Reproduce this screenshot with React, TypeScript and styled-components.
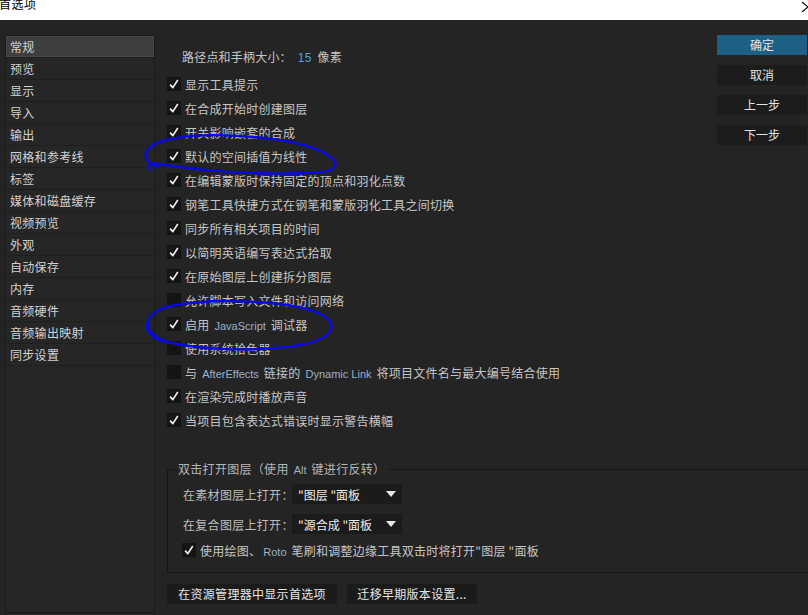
import React from 'react';
import styled, { createGlobalStyle } from 'styled-components';

const GlobalStyle = createGlobalStyle`
  html, body {
    margin: 0;
    padding: 0;
    background: #242424;
  }
  body {
    font-family: "Noto Sans CJK SC", "Noto Sans", "Liberation Sans", sans-serif;
    font-size: 12px;
    color: #c6c6c6;
  }
`;

const categories = [
  '常规', '预览', '显示', '导入', '输出', '网格和参考线', '标签', '媒体和磁盘缓存',
  '视频预览', '外观', '自动保存', '内存', '音频硬件', '音频输出映射', '同步设置',
];

type Part = string | { en: string };

const options: { checked: boolean; parts: Part[] }[] = [
  { checked: true, parts: ['显示工具提示'] },
  { checked: true, parts: ['在合成开始时创建图层'] },
  { checked: true, parts: ['开关影响嵌套的合成'] },
  { checked: true, parts: ['默认的空间插值为线性'] },
  { checked: true, parts: ['在编辑蒙版时保持固定的顶点和羽化点数'] },
  { checked: true, parts: ['钢笔工具快捷方式在钢笔和蒙版羽化工具之间切换'] },
  { checked: true, parts: ['同步所有相关项目的时间'] },
  { checked: true, parts: ['以简明英语编写表达式拾取'] },
  { checked: true, parts: ['在原始图层上创建拆分图层'] },
  { checked: false, parts: ['允许脚本写入文件和访问网络'] },
  { checked: true, parts: ['启用 ', { en: 'JavaScript' }, ' 调试器'] },
  { checked: false, parts: ['使用系统拾色器'] },
  { checked: false, parts: ['与 ', { en: 'AfterEffects' }, ' 链接的 ', { en: 'Dynamic Link' }, ' 将项目文件名与最大编号结合使用'] },
  { checked: true, parts: ['在渲染完成时播放声音'] },
  { checked: true, parts: ['当项目包含表达式错误时显示警告横幅'] },
];

export default function App() {
  return (
    <>
      <GlobalStyle />
      <Window>
        <TitleBar>
          <TitleText>首选项</TitleText>
          <CloseGlyph width="8" height="12" viewBox="0 0 8 12">
            <path d="M2 2 L8 7 M2 12 L8 7" stroke="#111" strokeWidth="1.2" fill="none" />
          </CloseGlyph>
        </TitleBar>

        <Body>
          <Sidebar>
            {categories.map((c, i) => (
              <NavItem key={c} $active={i === 0}>{c}</NavItem>
            ))}
          </Sidebar>

          <Content>
            <SizeRow>
              路径点和手柄大小：<Value>15</Value>像素
            </SizeRow>

            {options.map((o, i) => (
              <OptionRow key={i}>
                <Checkbox checked={o.checked} />
                <span>
                  {o.parts.map((p, j) =>
                    typeof p === 'string' ? <React.Fragment key={j}>{p}</React.Fragment> : <Latin key={j}>{p.en}</Latin>
                  )}
                </span>
              </OptionRow>
            ))}

            <Group>
              <Legend>双击打开图层（使用 <Latin>Alt</Latin> 键进行反转）</Legend>
              <GroupInner>
                <FieldRow>
                  <FieldLabel>在素材图层上打开：</FieldLabel>
                  <Select>
                    <span>"图层 "面板</span>
                    <Caret />
                  </Select>
                </FieldRow>
                <FieldRow>
                  <FieldLabel>在复合图层上打开：</FieldLabel>
                  <Select>
                    <span>"源合成 "面板</span>
                    <Caret />
                  </Select>
                </FieldRow>
                <GroupOption>
                  <Checkbox checked />
                  <span>使用绘图、<Latin>Roto</Latin> 笔刷和调整边缘工具双击时将打开"图层 "面板</span>
                </GroupOption>
              </GroupInner>
            </Group>

            <FooterRow>
              <FooterButton $width={170}>在资源管理器中显示首选项</FooterButton>
              <FooterButton $width={130}>迁移早期版本设置...</FooterButton>
            </FooterRow>
          </Content>

          <ButtonColumn>
            <DialogButton $primary>确定</DialogButton>
            <DialogButton>取消</DialogButton>
            <DialogButton>上一步</DialogButton>
            <DialogButton>下一步</DialogButton>
          </ButtonColumn>
        </Body>

        <Annotations width="808" height="615" viewBox="0 0 808 615">
          <path
            d="M158 167 C138 160 142 145 170 139 C208 131 296 136 326 154 C344 165 336 173 305 173 C262 175 200 171 160 164 C150 162 146 166 150 170"
            stroke="#0a0ae0" strokeWidth="2.4" fill="none" strokeLinecap="round"
          />
          <path
            d="M168 342 C142 334 139 314 170 306 C222 296 302 302 324 316 C340 327 330 341 294 346 C250 352 200 350 162 341 C152 338 146 331 147 324"
            stroke="#0a0ae0" strokeWidth="2.4" fill="none" strokeLinecap="round"
          />
        </Annotations>
      </Window>
    </>
  );
}

function Checkbox({ checked }: { checked?: boolean }) {
  return (
    <Box>
      {checked && (
        <svg width="14" height="14" viewBox="0 0 14 14">
          <path d="M3.2 7.6 L5.8 10.6 L10.8 3" stroke="#ececec" strokeWidth="1.7" fill="none" strokeLinejoin="round" />
        </svg>
      )}
    </Box>
  );
}

const Window = styled.div`
  position: relative;
  width: 808px;
  height: 615px;
  overflow: hidden;
  display: flex;
  flex-direction: column;
`;

const TitleBar = styled.div`
  height: 20px;
  background: #ffffff;
  display: flex;
  justify-content: space-between;
  align-items: flex-start;
  overflow: hidden;
`;

const TitleText = styled.div`
  color: #000;
  font-size: 12px;
  line-height: 12px;
  margin: -2px 0 0 -1px;
  letter-spacing: 0.5px;
`;

const CloseGlyph = styled.svg`
  display: block;
`;

const Body = styled.div`
  flex: 1;
  display: grid;
  grid-template-columns: 150px 1fr 90px;
  column-gap: 12px;
  padding: 15px 1px 2px 5px;
  min-height: 0;
`;

const Sidebar = styled.div`
  background: #262626;
  border: 1px solid #1a1a1a;
  display: flex;
  flex-direction: column;
`;

const NavItem = styled.div<{ $active?: boolean }>`
  height: 21px;
  line-height: 21px;
  padding-left: 4px;
  color: #d2d2d2;
  border-bottom: 1px solid #1e1e1e;
  background: ${(p) => (p.$active ? '#3e3e3e' : 'transparent')};
  box-shadow: ${(p) => (p.$active ? 'inset 0 0 0 1px #474747' : 'none')};
  letter-spacing: 0.3px;
`;

const Content = styled.div`
  display: flex;
  flex-direction: column;
  padding-top: 10px;
  min-width: 0;
`;

const SizeRow = styled.div`
  height: 24px;
  line-height: 24px;
  padding-left: 15px;
  margin-bottom: 3px;
  letter-spacing: 0.2px;
`;

const Value = styled.span`
  color: #4ea1dc;
  margin: 0 6px;
  font-family: "Liberation Sans", sans-serif;
`;

const OptionRow = styled.div`
  height: 24px;
  display: flex;
  align-items: center;
  gap: 4px;
  white-space: nowrap;
  letter-spacing: 0.25px;
`;

const GroupOption = styled(OptionRow)`
  height: 20px;
  margin-top: -4px;
`;

const Box = styled.span`
  width: 14px;
  height: 14px;
  flex: none;
  background: #141414;
  display: inline-flex;
`;

const Latin = styled.span`
  color: #9db0c6;
  font-family: "Liberation Sans", sans-serif;
  font-size: 11px;
  letter-spacing: 0;
  margin: 0 2px;
`;

const Group = styled.fieldset`
  margin: 29px -120px 0 0;
  padding: 0;
  border: 1px solid #161616;
  min-width: 0;
`;

const Legend = styled.legend`
  margin-left: 6px;
  padding: 0 4px;
  line-height: 16px;
  color: #b6b6b6;
  letter-spacing: 0.3px;
  white-space: nowrap;
`;

const GroupInner = styled.div`
  display: flex;
  flex-direction: column;
  gap: 10px;
  padding: 6px 0 12px 14px;
`;

const FieldRow = styled.div`
  display: flex;
  align-items: center;
  height: 20px;
`;

const FieldLabel = styled.span`
  flex: none;
  width: 110px;
  padding-left: 1px;
  box-sizing: border-box;
  white-space: nowrap;
  letter-spacing: 0.3px;
  color: #bdbdbd;
`;

const Select = styled.div`
  flex: none;
  width: 110px;
  height: 20px;
  background: #1b1b1b;
  color: #ececec;
  display: flex;
  align-items: center;
  justify-content: space-between;
  padding: 0 6px;
  box-sizing: border-box;
  white-space: nowrap;
`;

const Caret = styled.span`
  width: 0;
  height: 0;
  border-left: 5px solid transparent;
  border-right: 5px solid transparent;
  border-top: 6px solid #e8e8e8;
`;

const FooterRow = styled.div`
  display: flex;
  gap: 10px;
  margin-top: 11px;
`;

const FooterButton = styled.div<{ $width: number }>`
  width: ${(p) => p.$width}px;
  height: 20px;
  line-height: 20px;
  background: #1b1b1b;
  color: #e6e6e6;
  text-align: center;
  letter-spacing: 0.3px;
  white-space: nowrap;
`;

const ButtonColumn = styled.div`
  display: flex;
  flex-direction: column;
  gap: 10px;
`;

const DialogButton = styled.div<{ $primary?: boolean }>`
  height: 20px;
  line-height: 20px;
  text-align: center;
  color: #e4e4e4;
  background: ${(p) => (p.$primary ? '#1e6083' : '#1c1c1c')};
`;

const Annotations = styled.svg`
  position: absolute;
  left: 0;
  top: 0;
  pointer-events: none;
`;
